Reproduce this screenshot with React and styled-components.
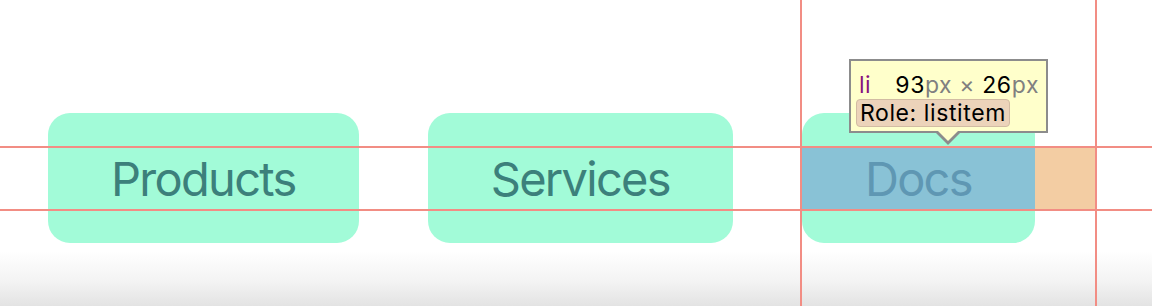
import React from 'react';
import styled, { createGlobalStyle } from 'styled-components';

const GlobalStyle = createGlobalStyle`
  html, body {
    margin: 0;
    padding: 0;
    background: #ffffff;
  }
`;

const Page = styled.div`
  position: relative;
  width: 1152px;
  height: 306px;
  overflow: hidden;
  background: linear-gradient(
    to bottom,
    #ffffff 0%,
    #ffffff 82%,
    #f3f3f3 92%,
    #e3e3e3 100%
  );
  font-family: Inter, 'Noto Sans', sans-serif;
`;

const NavList = styled.ul`
  display: flex;
  gap: 9px;
  margin: 0;
  padding: 113px 0 0 48px;
  list-style: none;
`;

const NavItem = styled.li`
  position: relative;
  margin-right: 60px;
  padding: 34px 63px 33px;
  background: #a2fbd8;
  border-radius: 22px;
  color: #3c807b;
  font-size: 47px;
  letter-spacing: -1.7px;
  line-height: 63px;
  white-space: nowrap;
`;

const ContentBox = styled.div`
  position: absolute;
  left: 0;
  right: 0;
  top: 34px;
  bottom: 33px;
  background: #89c2d6;
`;

const Label = styled.span`
  position: relative;
  color: ${(props) => (props.highlighted ? '#5f97b3' : 'inherit')};
`;

const MarginBox = styled.div`
  position: absolute;
  left: 100%;
  width: 60px;
  top: 34px;
  bottom: 33px;
  background: #f3cda3;
`;

const GuideH = styled.div`
  position: absolute;
  left: -1200px;
  right: -1200px;
  top: ${(props) => props.top}px;
  height: 2px;
  background: #f28d84;
`;

const GuideV = styled.div`
  position: absolute;
  top: -200px;
  bottom: -200px;
  left: ${(props) => props.left};
  width: 2px;
  background: #f28d84;
`;

const Tooltip = styled.div`
  position: absolute;
  left: 47px;
  top: -54px;
  box-sizing: border-box;
  width: 199px;
  height: 74px;
  padding: 10px 0 0 5px;
  background: #ffffcb;
  border: 2px solid #8c8c8c;
  font-family: Inter, 'Liberation Sans', sans-serif;
  font-size: 23px;
  letter-spacing: 0.6px;
  line-height: 28px;
  color: #000000;
  white-space: nowrap;

  &::before,
  &::after {
    content: '';
    position: absolute;
    width: 0;
    height: 0;
    border-style: solid;
    border-color: transparent;
  }

  &::before {
    top: 100%;
    left: 83px;
    border-width: 14px 14px 0 14px;
    border-top-color: #8c8c8c;
  }

  &::after {
    top: calc(100% - 2px);
    left: 85px;
    border-width: 12px 12px 0 12px;
    border-top-color: #ffffcb;
  }
`;

const TipRow = styled.div`
  padding-left: ${(props) => props.indent || 0}px;
`;

const TagName = styled.span`
  color: #881280;
  margin-right: 24px;
`;

const Num = styled.span`
  color: #000000;
`;

const Unit = styled.span`
  color: #808080;
`;

const RolePill = styled.span`
  display: inline-block;
  margin-top: -2px;
  padding: 0 3px;
  background: #ecd3ba;
  border: 1px solid #d2bba3;
  border-radius: 4px;
  line-height: 26px;
`;

const items = [
  { label: 'Products' },
  { label: 'Services' },
  { label: 'Docs', inspected: true },
];

const Inspector = () => (
  <>
    <ContentBox />
    <MarginBox />
    <GuideH top={33} />
    <GuideH top={96} />
    <GuideV left="-2px" />
    <GuideV left="calc(100% + 60px)" />
    <Tooltip>
      <TipRow indent={3}>
        <TagName>li</TagName>
        <Num>93</Num>
        <Unit>px × </Unit>
        <Num>26</Num>
        <Unit>px</Unit>
      </TipRow>
      <TipRow>
        <RolePill>Role: listitem</RolePill>
      </TipRow>
    </Tooltip>
  </>
);

const App = () => (
  <Page>
    <GlobalStyle />
    <NavList>
      {items.map((item) => (
        <NavItem key={item.label}>
          {item.inspected && <Inspector />}
          <Label highlighted={item.inspected}>{item.label}</Label>
        </NavItem>
      ))}
    </NavList>
  </Page>
);

export default App;
